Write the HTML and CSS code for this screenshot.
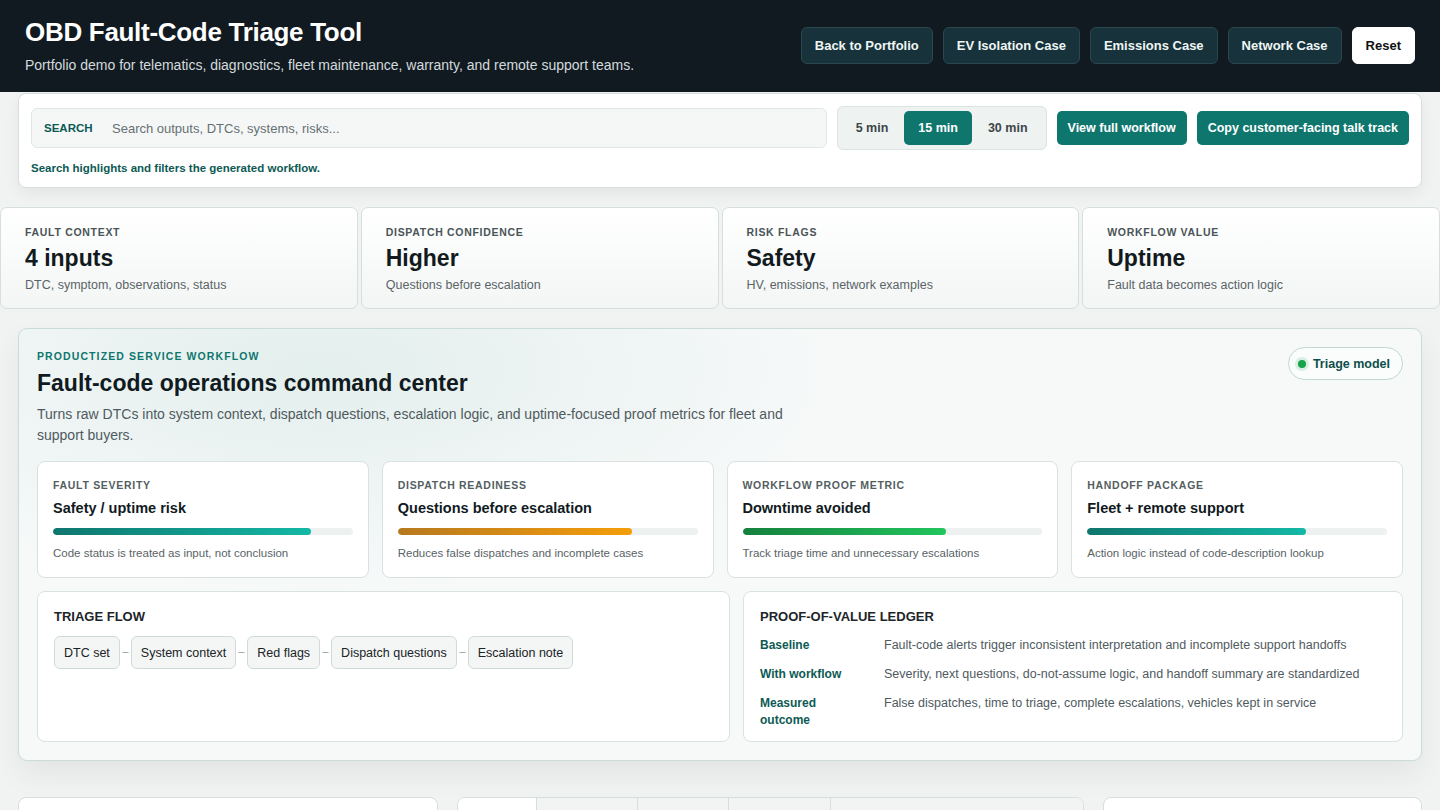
FILE: index.html
```html
<!DOCTYPE html>
<html lang="en">
<head>
  <meta charset="UTF-8" />
  <title>OBD Fault-Code Triage Tool</title>
  <meta name="viewport" content="width=device-width, initial-scale=1" />
  <link rel="stylesheet" href="styles.css">
</head>
<body>
  <header class="topbar">
    <div class="brand">
      <h1>OBD Fault-Code Triage Tool</h1>
      <p>Portfolio demo for telematics, diagnostics, fleet maintenance, warranty, and remote support teams.</p>
    </div>
    <nav class="top-actions">
      <button class="btn-dark">Back to Portfolio</button>
      <button class="btn-dark">EV Isolation Case</button>
      <button class="btn-dark">Emissions Case</button>
      <button class="btn-dark">Network Case</button>
      <button class="btn-light">Reset</button>
    </nav>
  </header>

  <section class="toolbar">
    <div class="toolbar-row">
      <label class="search">
        <span class="search-label">SEARCH</span>
        <input type="text" placeholder="Search outputs, DTCs, systems, risks..." />
      </label>
      <div class="segment">
        <button>5 min</button>
        <button class="active">15 min</button>
        <button>30 min</button>
      </div>
      <button class="btn-teal">View full workflow</button>
      <button class="btn-teal">Copy customer-facing talk track</button>
    </div>
    <p class="toolbar-note">Search highlights and filters the generated workflow.</p>
  </section>

  <!-- summary cards -->
  <section class="stats">
    <div class="stat">
      <span class="stat-label">FAULT CONTEXT</span>
      <strong>4 inputs</strong>
      <span class="stat-desc">DTC, symptom, observations, status</span>
    </div>
    <div class="stat">
      <span class="stat-label">DISPATCH CONFIDENCE</span>
      <strong>Higher</strong>
      <span class="stat-desc">Questions before escalation</span>
    </div>
    <div class="stat">
      <span class="stat-label">RISK FLAGS</span>
      <strong>Safety</strong>
      <span class="stat-desc">HV, emissions, network examples</span>
    </div>
    <div class="stat">
      <span class="stat-label">WORKFLOW VALUE</span>
      <strong>Uptime</strong>
      <span class="stat-desc">Fault data becomes action logic</span>
    </div>
  </section>

  <section class="workflow">
    <div class="workflow-head">
      <div>
        <span class="kicker">PRODUCTIZED SERVICE WORKFLOW</span>
        <h2>Fault-code operations command center</h2>
        <p>Turns raw DTCs into system context, dispatch questions, escalation logic, and uptime-focused proof metrics for fleet and support buyers.</p>
      </div>
      <span class="pill"><i class="dot"></i>Triage model</span>
    </div>

    <div class="metrics">
      <div class="metric">
        <span class="metric-label">FAULT SEVERITY</span>
        <h3>Safety / uptime risk</h3>
        <div class="bar"><div class="fill teal" style="width:86%"></div></div>
        <p>Code status is treated as input, not conclusion</p>
      </div>
      <div class="metric">
        <span class="metric-label">DISPATCH READINESS</span>
        <h3>Questions before escalation</h3>
        <div class="bar"><div class="fill amber" style="width:78%"></div></div>
        <p>Reduces false dispatches and incomplete cases</p>
      </div>
      <div class="metric">
        <span class="metric-label">WORKFLOW PROOF METRIC</span>
        <h3>Downtime avoided</h3>
        <div class="bar"><div class="fill green" style="width:68%"></div></div>
        <p>Track triage time and unnecessary escalations</p>
      </div>
      <div class="metric">
        <span class="metric-label">HANDOFF PACKAGE</span>
        <h3>Fleet + remote support</h3>
        <div class="bar"><div class="fill teal" style="width:73%"></div></div>
        <p>Action logic instead of code-description lookup</p>
      </div>
    </div>

    <div class="lower">
      <div class="box">
        <h4>TRIAGE FLOW</h4>
        <div class="flow">
          <span class="chip">DTC set</span>
          <span class="link"></span>
          <span class="chip">System context</span>
          <span class="link"></span>
          <span class="chip">Red flags</span>
          <span class="link"></span>
          <span class="chip">Dispatch questions</span>
          <span class="link"></span>
          <span class="chip">Escalation note</span>
        </div>
      </div>
      <div class="box">
        <h4>PROOF-OF-VALUE LEDGER</h4>
        <dl class="ledger">
          <dt>Baseline</dt>
          <dd>Fault-code alerts trigger inconsistent interpretation and incomplete support handoffs</dd>
          <dt>With workflow</dt>
          <dd>Severity, next questions, do-not-assume logic, and handoff summary are standardized</dd>
          <dt>Measured outcome</dt>
          <dd>False dispatches, time to triage, complete escalations, vehicles kept in service</dd>
        </dl>
      </div>
    </div>
  </section>

  <!-- panels below the fold -->
  <section class="panels">
    <div class="panel"></div>
    <div class="panel">
      <div class="tabs">
        <span class="tab on"></span>
        <span class="tab"></span>
        <span class="tab"></span>
        <span class="tab"></span>
        <span class="tab-rest"></span>
      </div>
    </div>
    <div class="panel"></div>
  </section>
</body>
</html>
```

FILE: styles.css
```css
* {
  margin: 0; padding: 0; box-sizing: border-box;
}

html, body {
  font-family: "Liberation Sans", Arial, sans-serif;
  background: #f1f2f2;
  color: #111a1e;
}

button, input {
  font-family: inherit;
}

/* header */
.topbar {
  background: #121a21;
  height: 92px;
  padding: 0 25px 0 25px;
  display: flex;
  align-items: center;
  justify-content: space-between;
}

.brand h1 {
  color: #fff;
  font-size: 26px;
  font-weight: 700;
  letter-spacing: -0.3px;
  margin-top: -3px;
}

.brand p {
  color: #d3dadd;
  font-size: 14px;
  margin-top: 9px;
}

.top-actions {
  display: flex;
  gap: 10px;
  margin-top: -2px;
}

.top-actions button {
  height: 37px;
  padding: 0 13px;
  border-radius: 6px;
  font-size: 13px;
  font-weight: 700;
  cursor: pointer;
}

.btn-dark {
  background: #17323a;
  border: 1px solid #2b464d;
  color: #eef6f5;
}

.btn-light {
  background: #fff;
  border: 1px solid #fff;
  color: #111;
}

/* search toolbar */
.toolbar {
  margin: 1px 18px 0;
  background: #fff;
  border: 1px solid #d6dfdd;
  border-radius: 8px;
  padding: 12px 12px 13px 12px;
  box-shadow: 0 6px 16px rgba(20, 40, 40, 0.06);
}

.toolbar-row {
  display: flex;
  align-items: center;
  gap: 10px;
}

.search {
  flex: 1;
  height: 40px;
  display: flex;
  align-items: center;
  background: #f5f7f7;
  border: 1px solid #dfe6e4;
  border-radius: 6px;
  padding: 0 12px;
}

.search-label {
  font-size: 11.5px;
  font-weight: 700;
  color: #0d5a54;
  width: 68px;
}

.search input {
  flex: 1;
  border: none;
  background: transparent;
  font-size: 13px;
  outline: none;
  color: #333;
}

.search input::placeholder {
  color: #666f72;
}

.segment {
  display: flex;
  gap: 2px;
  background: #eef2f1;
  border: 1px solid #dbe3e1;
  border-radius: 6px;
  padding: 4px;
}

.segment button {
  height: 34px;
  padding: 0 14px;
  border: none;
  background: transparent;
  border-radius: 5px;
  font-size: 12.5px;
  font-weight: 700;
  color: #3d4649;
}

.segment button.active {
  background: #0f766e;
  color: #fff;
}

.btn-teal {
  height: 34px;
  padding: 0 11px;
  background: #0f766e;
  border: none;
  border-radius: 5px;
  color: #fff;
  font-size: 12.5px;
  font-weight: 700;
}

.toolbar-note {
  margin-top: 12px;
  font-size: 11.5px;
  font-weight: 700;
  color: #0d5a54;
}

/* stats */
.stats {
  display: grid;
  grid-template-columns: repeat(4, 1fr);
  gap: 3px;
  margin-top: 19px;
}

.stat {
  height: 102px;
  background: linear-gradient(180deg, #fff 0%, #f3f6f5 100%);
  border: 1px solid #d5dfdc;
  border-radius: 7px;
  padding: 18px 24px;
  display: flex;
  flex-direction: column;
}

.stat-label {
  font-size: 10.5px;
  font-weight: 700;
  letter-spacing: 0.7px;
  color: #4a5457;
}

.stat strong {
  font-size: 23px;
  color: #121a1d;
  margin-top: 7px;
}

.stat-desc {
  font-size: 12.5px;
  color: #5a6468;
  margin-top: 6px;
}

/* workflow */
.workflow {
  margin: 19px 18px 0;
  border: 1px solid #c9dcd7;
  border-radius: 9px;
  padding: 17px 18px 18px;
  background:
    radial-gradient(ellipse 520px 220px at 300px 40px, #e3efed 0%, rgba(227, 239, 237, 0) 100%),
    #f7f9f9;
  box-shadow: 0 14px 30px rgba(20, 40, 40, 0.06);
}

.workflow-head {
  display: flex;
  justify-content: space-between;
  align-items: flex-start;
}

.kicker {
  font-size: 10.5px;
  font-weight: 700;
  letter-spacing: 1.1px;
  color: #0f766e;
}

.workflow-head h2 {
  font-size: 23px;
  font-weight: 700;
  margin-top: 6px;
}

.workflow-head p {
  max-width: 752px;
  font-size: 14px;
  line-height: 21px;
  color: #4f5a5e;
  margin-top: 7px;
}

.pill {
  display: flex;
  align-items: center;
  gap: 7px;
  height: 33px;
  margin-top: 1px;
  padding: 0 12px 0 9px;
  border: 1px solid #bfd9d2;
  border-radius: 17px;
  background: #fbfdfc;
  font-size: 12.5px;
  font-weight: 700;
  color: #0d4f4a;
}

.dot {
  width: 8px;
  height: 8px;
  border-radius: 50%;
  background: #16a34a;
  box-shadow: 0 0 0 3px #d9efe3;
}

.metrics {
  display: grid;
  grid-template-columns: repeat(4, 1fr);
  gap: 13px;
  margin-top: 15px;
}

.metric {
  background: #fff;
  border: 1px solid #d9e2e0;
  border-radius: 8px;
  padding: 17px 15px 15px;
  height: 117px;
}

.metric-label {
  display: block;
  font-size: 10.5px;
  font-weight: 700;
  letter-spacing: 0.7px;
  color: #545e61;
}

.metric h3 {
  font-size: 14.5px;
  font-weight: 700;
  margin-top: 9px;
}

.bar {
  height: 7px;
  background: #edf1f0;
  border-radius: 4px;
  margin-top: 12px;
  overflow: hidden;
}

.fill {
  height: 100%;
  border-radius: 4px;
}

.fill.teal {
  background: linear-gradient(90deg, #0f766e, #14b8a6);
}

.fill.amber {
  background: linear-gradient(90deg, #b7791f, #f59e0b);
}

.fill.green {
  background: linear-gradient(90deg, #15803d, #22c55e);
}

.metric p {
  font-size: 11.5px;
  color: #596367;
  margin-top: 12px;
}

.lower {
  display: grid;
  grid-template-columns: 693px 1fr;
  gap: 13px;
  margin-top: 13px;
}

.box {
  background: #fff;
  border: 1px solid #d9e2e0;
  border-radius: 8px;
  padding: 17px 16px;
  height: 151px;
}

.box h4 {
  font-size: 13px;
  font-weight: 700;
  color: #1c2529;
}

.flow {
  display: flex;
  align-items: center;
  margin-top: 12px;
}

.chip {
  height: 33px;
  display: flex;
  align-items: center;
  padding: 0 9px;
  background: #f3f6f5;
  border: 1px solid #cfdbd8;
  border-radius: 6px;
  font-size: 12.5px;
  color: #1a2326;
}

.link {
  width: 11px;
  height: 1px;
  background: #9aaeab;
  transform: scaleX(0.55);
}

.ledger {
  display: grid;
  grid-template-columns: 124px 1fr;
  row-gap: 12px;
  margin-top: 13px;
  font-size: 12.5px;
  line-height: 17px;
}

.ledger dt {
  font-weight: 700;
  color: #0d5a54;
  font-size: 12px;
  padding-right: 30px;
}

.ledger dd {
  color: #4f5a5e;
}

/* bottom panels */
.panels {
  display: grid;
  grid-template-columns: 420px 627px 1fr;
  gap: 19px;
  margin: 36px 18px 0;
}

.panel {
  background: #fff;
  border: 1px solid #d6dfdd;
  border-radius: 8px;
  height: 200px;
  overflow: hidden;
}

.tabs {
  display: flex;
  height: 40px;
  background: #f1f4f3;
  border-bottom: 1px solid #d6dfdd;
}

.tab {
  border-right: 1px solid #d6dfdd;
  width: 101px;
}

.tab:nth-child(3) { width: 91px; }
.tab:nth-child(4) { width: 102px; }

.tab.on {
  background: #fff;
  width: 79px;
}

.tab-rest {
  flex: 1;
}
```
